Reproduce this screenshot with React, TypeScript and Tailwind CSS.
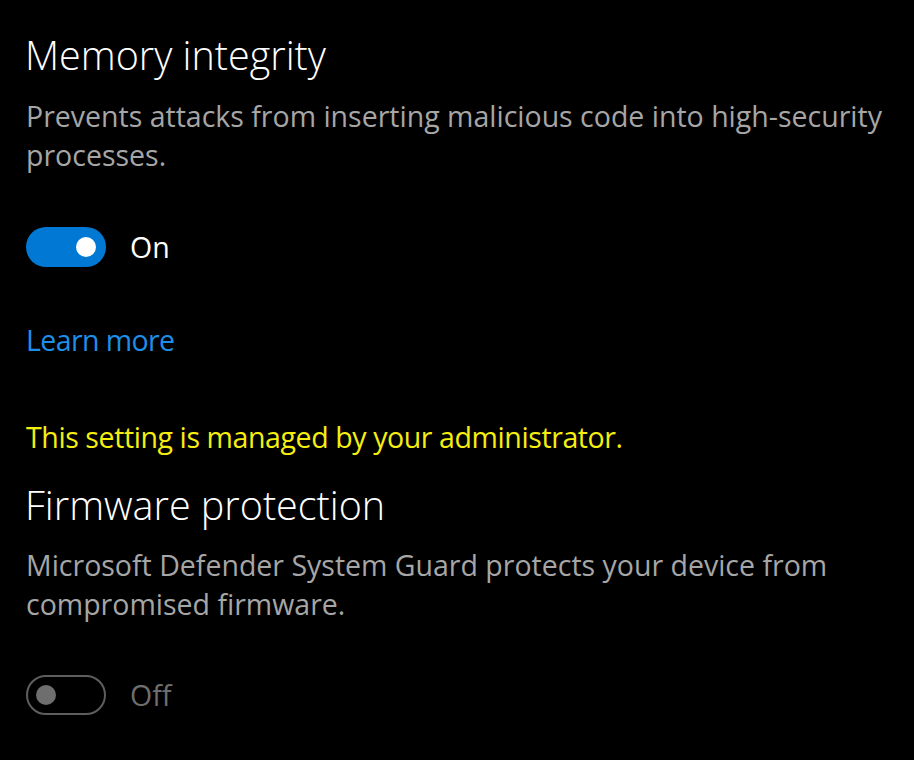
export default function App() {
  return (
    <div
      className="min-h-screen w-full bg-black text-white pl-[26px] pr-4 pt-[31px]"
      style={{ fontFamily: '"Open Sans", "Noto Sans", sans-serif' }}
    >
      <section>
        <h2 className="-ml-[1px] text-[39.5px] leading-[48px] font-[350] tracking-[0px]">Memory integrity</h2>
        <p className="mt-[18px] text-[28.5px] leading-[39px] font-normal text-[#a6a6a6] max-w-[880px]">
          Prevents attacks from inserting malicious code into high-security processes.
        </p>
        <div className="mt-[52px] flex items-center gap-6">
          <div className="flex h-[40px] w-[80px] items-center justify-end rounded-full bg-[#0078d4] pr-[10px]">
            <span className="h-[20px] w-[20px] rounded-full bg-white" />
          </div>
          <span className="text-[28.5px] leading-[40px]">On</span>
        </div>
        <a className="mt-[53px] block text-[28.5px] leading-[40px] tracking-[-0.6px] text-[#1f8ee6]">Learn more</a>
        <p className="mt-[57px] text-[28.5px] leading-[40px] tracking-[-0.4px] text-[#f5ee10]">
          This setting is managed by your administrator.
        </p>
      </section>
      <section className="mt-[24px]">
        <h2 className="-ml-[1px] text-[39.5px] leading-[48px] font-[350] tracking-[0px]">Firmware protection</h2>
        <p className="mt-[17px] text-[28.5px] leading-[39px] font-normal text-[#a6a6a6] max-w-[880px]">
          Microsoft Defender System Guard protects your device from compromised firmware.
        </p>
        <div className="mt-[51px] flex items-center gap-6">
          <div className="flex h-[40px] w-[80px] items-center rounded-full border-2 border-[#5e5e5e] pl-[8px]">
            <span className="h-[20px] w-[20px] rounded-full bg-[#6e6e6e]" />
          </div>
          <span className="text-[28.5px] leading-[40px] text-[#6e6e6e]">Off</span>
        </div>
      </section>
    </div>
  );
}
